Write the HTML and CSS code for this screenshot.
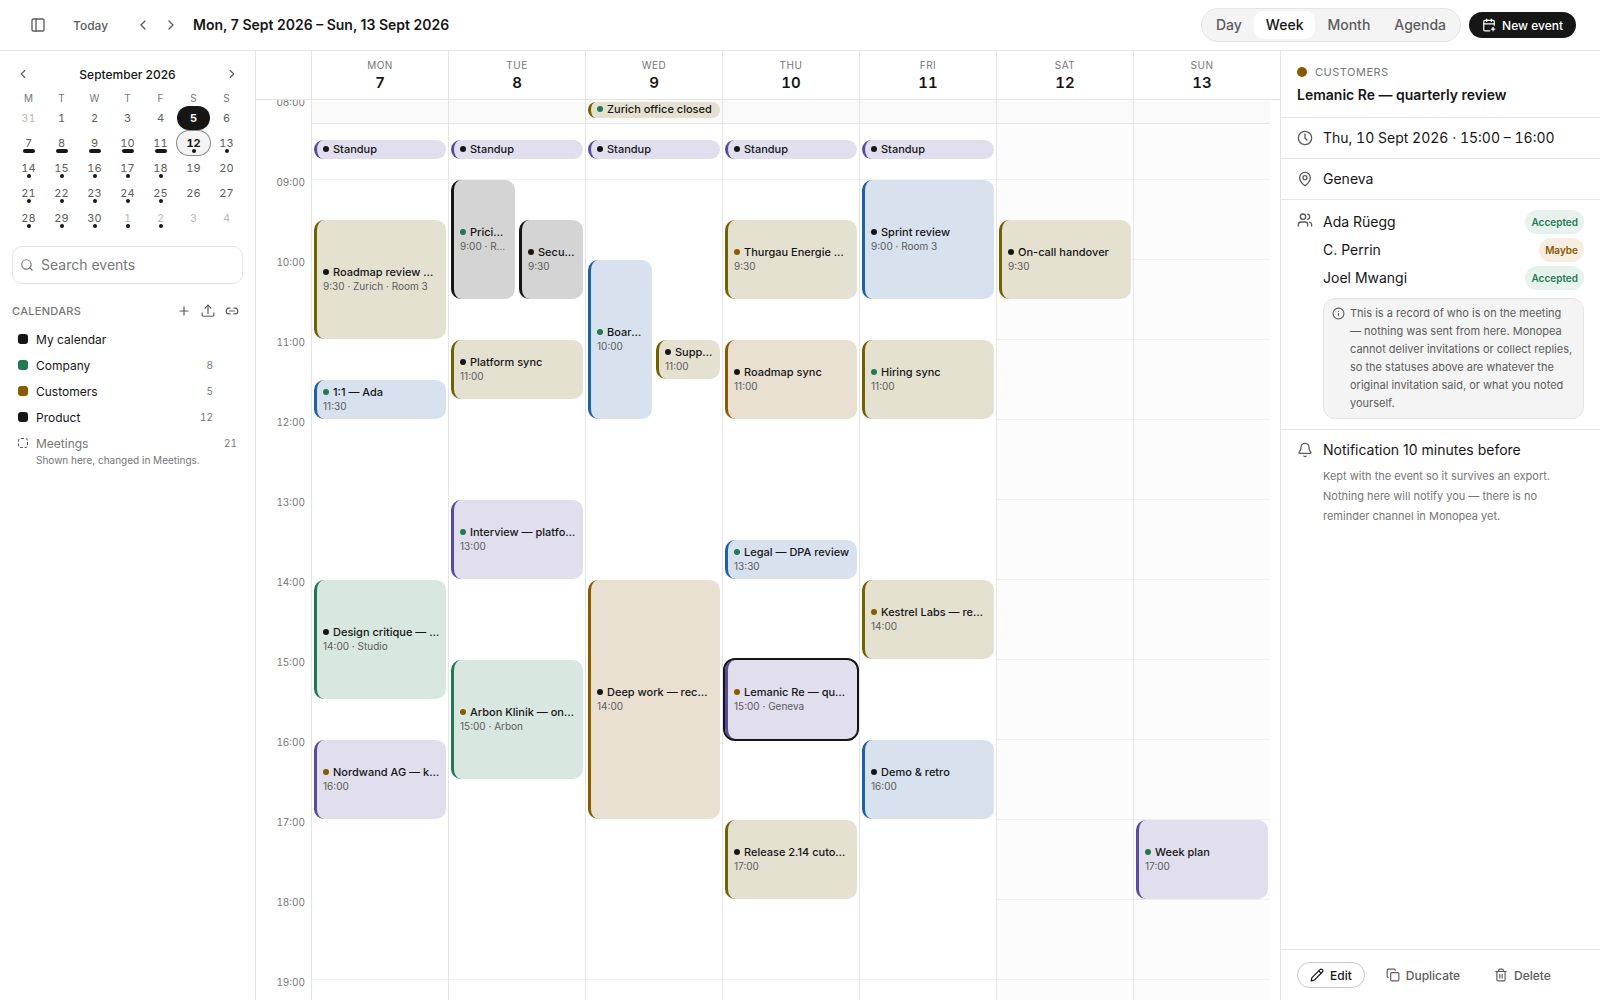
FILE: index.html
```html
<!DOCTYPE html>
<html lang="en">
<head>
    <meta charset="UTF-8">
    <meta name="viewport" content="width=device-width, initial-scale=1.0">
    <title>Calendar</title>
    <link rel="stylesheet" href="styles.css">
</head>
<body>

<!-- Shared icons -->
<svg class="sprite" aria-hidden="true">
    <symbol id="chevron-left" viewBox="0 0 24 24"><path d="m15 18-6-6 6-6"/></symbol>
    <symbol id="chevron-right" viewBox="0 0 24 24"><path d="m9 18 6-6-6-6"/></symbol>
</svg>

<header class="topbar">
    <button class="icon-btn" aria-label="Toggle sidebar"><svg class="icon" viewBox="0 0 24 24"><rect x="3" y="3" width="18" height="18" rx="2"/><path d="M9 3v18"/></svg></button>
    <button class="today-btn">Today</button>
    <div class="pager">
        <button class="icon-btn" aria-label="Previous week"><svg class="icon"><use href="#chevron-left"/></svg></button>
        <button class="icon-btn" aria-label="Next week"><svg class="icon"><use href="#chevron-right"/></svg></button>
    </div>
    <h1>Mon, 7 Sept 2026 – Sun, 13 Sept 2026</h1>
    <div class="views">
        <button>Day</button>
        <button class="active">Week</button>
        <button>Month</button>
        <button>Agenda</button>
    </div>
    <button class="new-event"><svg class="icon" viewBox="0 0 24 24"><path d="M16 19h6"/><path d="M16 2v4"/><path d="M19 16v6"/><path d="M21 12.6V6a2 2 0 0 0-2-2H5a2 2 0 0 0-2 2v14a2 2 0 0 0 2 2h8.5"/><path d="M3 10h18"/><path d="M8 2v4"/></svg>New event</button>
</header>

<div class="layout">
    <aside class="sidebar">
        <div class="month-nav">
            <button class="icon-btn" aria-label="Previous month"><svg class="icon"><use href="#chevron-left"/></svg></button>
            <h2>September 2026</h2>
            <button class="icon-btn" aria-label="Next month"><svg class="icon"><use href="#chevron-right"/></svg></button>
        </div>
        <div class="month">
            <span>M</span><span>T</span><span>W</span><span>T</span><span>F</span><span>S</span><span>S</span>
            <button class="out">31</button><button>1</button><button>2</button><button>3</button><button>4</button><button class="today">5</button><button>6</button>
            <button class="many">7</button><button class="many">8</button><button class="many">9</button><button class="many">10</button><button class="many">11</button><button class="one picked">12</button><button class="one">13</button>
            <button class="one">14</button><button class="one">15</button><button class="one">16</button><button class="one">17</button><button class="one">18</button><button>19</button><button>20</button>
            <button class="one">21</button><button class="one">22</button><button class="one">23</button><button class="one">24</button><button class="one">25</button><button>26</button><button>27</button>
            <button class="one">28</button><button class="one">29</button><button class="one">30</button><button class="one out">1</button><button class="one out">2</button><button class="out">3</button><button class="out">4</button>
        </div>

        <label class="search">
            <svg class="icon" viewBox="0 0 24 24"><circle cx="11" cy="11" r="8"/><path d="m21 21-4.3-4.3"/></svg>
            <input type="text" placeholder="Search events" aria-label="Search events">
        </label>

        <div class="cal-head">
            <h3>Calendars</h3>
            <button class="icon-btn" aria-label="Add calendar"><svg class="icon" viewBox="0 0 24 24"><path d="M5 12h14M12 5v14"/></svg></button>
            <button class="icon-btn" aria-label="Import"><svg class="icon" viewBox="0 0 24 24"><path d="M12 2v14"/><path d="m7 7 5-5 5 5"/><path d="M2 15v4a2 2 0 0 0 2 2h16a2 2 0 0 0 2-2v-4"/></svg></button>
            <button class="icon-btn" aria-label="Subscribe"><svg class="icon" viewBox="0 0 24 24"><path d="M9 17H7A5 5 0 0 1 7 7h2"/><path d="M15 7h2a5 5 0 1 1 0 10h-2"/><path d="M8 12h8"/></svg></button>
        </div>
        <ul class="cal-list">
            <li><label><input type="checkbox" class="ink" checked>My calendar</label></li>
            <li><label><input type="checkbox" class="green" checked>Company</label><span class="count">8</span></li>
            <li><label><input type="checkbox" class="amber" checked>Customers</label><span class="count">5</span></li>
            <li><label><input type="checkbox" class="ink" checked>Product</label><span class="count">12</span></li>
            <li class="linked"><label><input type="checkbox">Meetings</label><span class="count">21</span></li>
        </ul>
        <p class="cal-note">Shown here, changed in Meetings.</p>
    </aside>

    <main class="week">
        <div class="week-head">
            <div></div>
            <div class="day-head"><span>Mon</span><b>7</b></div>
            <div class="day-head"><span>Tue</span><b>8</b></div>
            <div class="day-head"><span>Wed</span><b>9</b></div>
            <div class="day-head"><span>Thu</span><b>10</b></div>
            <div class="day-head"><span>Fri</span><b>11</b></div>
            <div class="day-head"><span>Sat</span><b>12</b></div>
            <div class="day-head"><span>Sun</span><b>13</b></div>
        </div>
        <div class="scroller">
            <div class="all-day">
                <div></div><div></div>
                <div><button class="event olive"><span class="title"><i class="green"></i><span>Zurich office closed</span></span></button></div>
                <div></div><div></div><div></div><div></div>
            </div>
            <!-- one row is 15 minutes, row 1 is 08:00 -->
            <div class="grid">
                <div class="hours">
                    <span>08:00</span><span>09:00</span><span>10:00</span><span>11:00</span><span>12:00</span><span>13:00</span><span>14:00</span><span>15:00</span><span>16:00</span><span>17:00</span><span>18:00</span><span>19:00</span>
                </div>

                <div class="day">
                    <button class="event violet" style="grid-row: 3 / span 1"><span class="title"><i class="ink"></i><span>Standup</span></span></button>
                    <button class="event olive" style="grid-row: 7 / span 6"><span class="title"><i class="ink"></i><span>Roadmap review with product</span></span><small>9:30 · Zurich · Room 3</small></button>
                    <button class="event blue" style="grid-row: 15 / span 2"><span class="title"><i class="green"></i><span>1:1 — Ada</span></span><small>11:30</small></button>
                    <button class="event mint" style="grid-row: 25 / span 6"><span class="title"><i class="ink"></i><span>Design critique — calendar</span></span><small>14:00 · Studio</small></button>
                    <button class="event violet" style="grid-row: 33 / span 4"><span class="title"><i class="amber"></i><span>Nordwand AG — kickoff</span></span><small>16:00</small></button>
                </div>

                <div class="day">
                    <button class="event violet" style="grid-row: 3 / span 1"><span class="title"><i class="ink"></i><span>Standup</span></span></button>
                    <button class="event grey left" style="grid-row: 5 / span 6"><span class="title"><i class="green"></i><span>Pricing review</span></span><small>9:00 · Room 1</small></button>
                    <button class="event grey right" style="grid-row: 7 / span 4"><span class="title"><i class="ink"></i><span>Security review</span></span><small>9:30</small></button>
                    <button class="event olive" style="grid-row: 13 / span 3"><span class="title"><i class="ink"></i><span>Platform sync</span></span><small>11:00</small></button>
                    <button class="event violet" style="grid-row: 21 / span 4"><span class="title"><i class="green"></i><span>Interview — platform</span></span><small>13:00</small></button>
                    <button class="event mint" style="grid-row: 29 / span 6"><span class="title"><i class="amber"></i><span>Arbon Klinik — onboarding</span></span><small>15:00 · Arbon</small></button>
                </div>

                <div class="day">
                    <button class="event violet" style="grid-row: 3 / span 1"><span class="title"><i class="ink"></i><span>Standup</span></span></button>
                    <button class="event blue left" style="grid-row: 9 / span 8"><span class="title"><i class="green"></i><span>Board prep</span></span><small>10:00</small></button>
                    <button class="event olive right" style="grid-row: 13 / span 2"><span class="title"><i class="ink"></i><span>Support sync</span></span><small>11:00</small></button>
                    <button class="event brown" style="grid-row: 25 / span 12"><span class="title"><i class="ink"></i><span>Deep work — recurrence</span></span><small>14:00</small></button>
                </div>

                <div class="day">
                    <button class="event violet" style="grid-row: 3 / span 1"><span class="title"><i class="ink"></i><span>Standup</span></span></button>
                    <button class="event olive" style="grid-row: 7 / span 4"><span class="title"><i class="amber"></i><span>Thurgau Energie — demo</span></span><small>9:30</small></button>
                    <button class="event brown" style="grid-row: 13 / span 4"><span class="title"><i class="ink"></i><span>Roadmap sync</span></span><small>11:00</small></button>
                    <button class="event blue" style="grid-row: 23 / span 2"><span class="title"><i class="green"></i><span>Legal — DPA review</span></span><small>13:30</small></button>
                    <button class="event violet selected" style="grid-row: 29 / span 4"><span class="title"><i class="amber"></i><span>Lemanic Re — quarterly review</span></span><small>15:00 · Geneva</small></button>
                    <button class="event olive" style="grid-row: 37 / span 4"><span class="title"><i class="ink"></i><span>Release 2.14 cutover</span></span><small>17:00</small></button>
                </div>

                <div class="day">
                    <button class="event violet" style="grid-row: 3 / span 1"><span class="title"><i class="ink"></i><span>Standup</span></span></button>
                    <button class="event blue" style="grid-row: 5 / span 6"><span class="title"><i class="ink"></i><span>Sprint review</span></span><small>9:00 · Room 3</small></button>
                    <button class="event olive" style="grid-row: 13 / span 4"><span class="title"><i class="green"></i><span>Hiring sync</span></span><small>11:00</small></button>
                    <button class="event olive" style="grid-row: 25 / span 4"><span class="title"><i class="amber"></i><span>Kestrel Labs — renewal</span></span><small>14:00</small></button>
                    <button class="event blue" style="grid-row: 33 / span 4"><span class="title"><i class="ink"></i><span>Demo &amp; retro</span></span><small>16:00</small></button>
                </div>

                <div class="day weekend">
                    <button class="event olive" style="grid-row: 7 / span 4"><span class="title"><i class="ink"></i><span>On-call handover</span></span><small>9:30</small></button>
                </div>

                <div class="day weekend">
                    <button class="event violet" style="grid-row: 37 / span 4"><span class="title"><i class="green"></i><span>Week plan</span></span><small>17:00</small></button>
                </div>
            </div>
        </div>
    </main>

    <aside class="panel">
        <div class="panel-head">
            <p><i class="amber"></i>Customers</p>
            <h2>Lemanic Re — quarterly review</h2>
        </div>
        <div class="field">
            <svg class="icon" viewBox="0 0 24 24"><circle cx="12" cy="12" r="10"/><path d="M12 6v6l3 3"/></svg>
            <p class="when">Thu, 10 Sept 2026 · 15:00 – 16:00</p>
        </div>
        <div class="field">
            <svg class="icon" viewBox="0 0 24 24"><path d="M20 10c0 5-5.5 10.2-7.4 11.8a1 1 0 0 1-1.2 0C9.5 20.2 4 15 4 10a8 8 0 0 1 16 0"/><circle cx="12" cy="10" r="3"/></svg>
            <p>Geneva</p>
        </div>
        <div class="field people">
            <svg class="icon" viewBox="0 0 24 24"><path d="M16 21v-2a4 4 0 0 0-4-4H6a4 4 0 0 0-4 4v2"/><circle cx="9" cy="7" r="4"/><path d="M22 21v-2a4 4 0 0 0-3-3.9"/><path d="M16 3.1a4 4 0 0 1 0 7.8"/></svg>
            <div>
                <ul>
                    <li>Ada Rüegg<span class="status">Accepted</span></li>
                    <li>C. Perrin<span class="status maybe">Maybe</span></li>
                    <li>Joel Mwangi<span class="status">Accepted</span></li>
                </ul>
                <div class="note">
                    <svg class="icon" viewBox="0 0 24 24"><circle cx="12" cy="12" r="10"/><path d="M12 16v-4M12 8h.01"/></svg>
                    <p>This is a record of who is on the meeting — nothing was sent from here. Monopea cannot deliver invitations or collect replies, so the statuses above are whatever the original invitation said, or what you noted yourself.</p>
                </div>
            </div>
        </div>
        <div class="field last">
            <svg class="icon" viewBox="0 0 24 24"><path d="M10.3 21a2 2 0 0 0 3.4 0"/><path d="M3.3 15.3A1 1 0 0 0 4 17h16a1 1 0 0 0 .7-1.7C19.4 14 18 12.5 18 8A6 6 0 0 0 6 8c0 4.5-1.4 6-2.7 7.3"/></svg>
            <div>
                <p>Notification 10 minutes before</p>
                <p class="hint">Kept with the event so it survives an export. Nothing here will notify you — there is no reminder channel in Monopea yet.</p>
            </div>
        </div>
        <footer>
            <button class="edit"><svg class="icon" viewBox="0 0 24 24"><path d="M21.2 6.8a1 1 0 0 0-4-4L3.8 16.2a2 2 0 0 0-.5.8l-1.3 4.4a.5.5 0 0 0 .6.6l4.4-1.3a2 2 0 0 0 .8-.5z"/><path d="m15 5 4 4"/></svg>Edit</button>
            <button><svg class="icon" viewBox="0 0 24 24"><rect x="8" y="8" width="14" height="14" rx="2"/><path d="M4 16c-1.1 0-2-.9-2-2V4c0-1.1.9-2 2-2h10c1.1 0 2 .9 2 2"/></svg>Duplicate</button>
            <button><svg class="icon" viewBox="0 0 24 24"><path d="M3 6h18"/><path d="M19 6v14a2 2 0 0 1-2 2H7a2 2 0 0 1-2-2V6"/><path d="M8 6V4a2 2 0 0 1 2-2h4a2 2 0 0 1 2 2v2"/><path d="M10 11v6M14 11v6"/></svg>Delete</button>
        </footer>
    </aside>
</div>

</body>
</html>
```

FILE: styles.css
```css
* {
    box-sizing: border-box;
    margin: 0;
    padding: 0;
}
body {
    display: flex;
    flex-direction: column;
    height: 100vh;
    font-family: Inter, "Liberation Sans", sans-serif;
    font-size: 12px;
    color: #161616;
    background: #fff;
    overflow: hidden;
}
button, input {
    font: inherit;
    color: inherit;
    background: none;
    border: 0;
}
button {
    cursor: pointer;
}
ul {
    list-style: none;
}
.sprite {
    display: none;
}
.icon {
    width: 16px;
    height: 16px;
    flex: none;
    fill: none;
    stroke: currentColor;
    stroke-width: 2;
    stroke-linecap: round;
    stroke-linejoin: round;
}
.icon-btn {
    display: flex;
    align-items: center;
    justify-content: center;
    width: 22px;
    height: 22px;
    color: #5c5c5c;
}
.month, .count, .hours, .day-head, .when {
    font-variant-numeric: tabular-nums;
}

/* Calendar colours */
.ink { background: #161616; }
.green { background: #1f7a54; }
.amber { background: #8a5a00; }

/* Top bar */
.topbar {
    display: flex;
    align-items: center;
    height: 51px;
    padding: 0 24px 0 27px;
    border-bottom: 1px solid #e5e5e5;
}
.today-btn {
    margin-left: 24px;
    font-weight: 500;
    color: #5c5c5c;
}
.pager {
    display: flex;
    gap: 6px;
    margin: 0 11px 0 24px;
}
.topbar h1 {
    font-size: 14px;
    font-weight: 600;
    line-height: 20px;
}
.views {
    display: flex;
    margin-left: auto;
    padding: 2px;
    border: 1px solid #e5e5e5;
    border-radius: 17px;
    background: #f4f4f4;
}
.views button {
    height: 28px;
    padding: 0 12px 1px;
    border-radius: 10px;
    font-size: 14px;
    font-weight: 500;
    color: #5c5c5c;
}
.views .active {
    background: #fff;
    color: #161616;
}
.new-event {
    display: flex;
    align-items: center;
    gap: 6px;
    height: 26px;
    margin-left: 8px;
    padding: 0 13px;
    border-radius: 13px;
    background: #161616;
    color: #fff;
    font-weight: 500;
}
.new-event .icon {
    width: 14px;
    height: 14px;
}

.layout {
    display: flex;
    flex: 1;
    min-height: 0;
}

/* Sidebar */
.sidebar {
    width: 256px;
    flex: none;
    padding: 12px;
    border-right: 1px solid #e5e5e5;
}
.month-nav {
    display: flex;
    align-items: center;
    justify-content: space-between;
}
.month-nav h2 {
    font-size: 12px;
    font-weight: 500;
}
.month-nav .icon {
    width: 14px;
    height: 14px;
}
.month {
    display: grid;
    grid-template-columns: repeat(7, 1fr);
    row-gap: 1px;
}
.month span {
    padding-top: 7px;
    font-size: 10px;
    line-height: 13px;
    text-align: center;
    color: #767676;
}
.month button {
    position: relative;
    height: 24px;
    border-radius: 12px;
    font-size: 11px;
    color: #5c5c5c;
}
.month .out {
    color: #bbb;
}
.month .today {
    background: #161616;
    color: #fff;
    font-weight: 700;
}
.month .picked {
    background: #f4f4f4;
    box-shadow: 0 0 0 1px #8a8a8a;
    color: #161616;
    font-weight: 700;
}
.month .one::after, .month .many::after {
    content: "";
    position: absolute;
    left: 50%;
    bottom: 2px;
    width: 4px;
    height: 4px;
    border-radius: 2px;
    background: #161616;
    transform: translateX(-50%);
}
.month .many::after {
    width: 12px;
}
.search {
    display: flex;
    align-items: center;
    gap: 7px;
    height: 38px;
    margin-top: 16px;
    padding: 0 7px;
    border: 1px solid #e5e5e5;
    border-radius: 10px;
    color: #767676;
}
.search .icon {
    width: 14px;
    height: 14px;
}
.search input {
    flex: 1;
    min-width: 0;
    padding-bottom: 2px;
    font-size: 14px;
    outline: none;
}
.search input::placeholder {
    color: #767676;
}
.cal-head {
    display: flex;
    align-items: center;
    gap: 2px;
    margin: 16px 0 4px;
}
.cal-head h3 {
    flex: 1;
    font-size: 11px;
    font-weight: 500;
    letter-spacing: 0.3px;
    text-transform: uppercase;
    color: #767676;
}
.cal-head .icon {
    width: 14px;
    height: 14px;
}
.cal-list li {
    display: flex;
    align-items: center;
    justify-content: space-between;
    height: 26px;
    padding: 0 30px 0 6px;
}
.cal-list label {
    display: flex;
    align-items: center;
    gap: 8px;
}
.cal-list input {
    appearance: none;
    width: 10px;
    height: 10px;
    border-radius: 3px;
}
.count {
    font-size: 10px;
    color: #767676;
}
.cal-list .linked {
    padding-right: 6px;
    color: #767676;
}
.linked input {
    border: 1px dashed #5b4b9a;
}
.cal-note {
    margin-top: -3px;
    padding-left: 24px;
    font-size: 10px;
    line-height: 14px;
    color: #767676;
}

/* Week grid */
.week {
    display: flex;
    flex: 1;
    flex-direction: column;
    min-width: 0;
}
.week-head, .grid {
    display: grid;
    grid-template-columns: 55px repeat(7, minmax(0, 1fr));
}
.week-head {
    padding-right: 10px;
    border-bottom: 1px solid #e5e5e5;
}
.day-head {
    padding: 7px 0 6px;
    border-left: 1px solid #e5e5e5;
    text-align: center;
}
.day-head span {
    display: block;
    margin-bottom: 1px;
    font-size: 10px;
    line-height: 14px;
    letter-spacing: 0.5px;
    text-transform: uppercase;
    color: #767676;
}
.day-head b {
    display: block;
    font-size: 15px;
    font-weight: 600;
    line-height: 20px;
}
.scroller {
    flex: 1;
    min-height: 0;
    padding-right: 10px;
    overflow-y: auto;
    scrollbar-width: none;
}
/* stays on top of the hours while they scroll */
.all-day {
    position: sticky;
    top: 0;
    z-index: 2;
    display: grid;
    grid-template-columns: repeat(7, minmax(0, 1fr));
    height: 24px;
    margin: 0 0 -24px 55px;
    border-bottom: 1px solid #e5e5e5;
    background: #fafafa;
}
.all-day > div {
    padding: 2px;
    border-left: 1px solid #e5e5e5;
}
.all-day .event {
    width: 100%;
    height: 16px;
    margin: 0;
}
.hours {
    margin-top: -6px;
    padding-right: 6px;
}
.hours span {
    display: block;
    height: 80px;
    font-size: 10px;
    line-height: 16px;
    text-align: right;
    color: #767676;
}
.day {
    display: grid;
    grid-template-columns: 1fr 1fr;
    grid-template-rows: repeat(48, 20px);
    border-left: 1px solid #e5e5e5;
    /* working hours, 09:00 to 18:00, are plain white */
    background:
        linear-gradient(#fff, #fff) 0 80px / 100% 720px no-repeat,
        repeating-linear-gradient(transparent 0 79px, #f0f0f0 79px 80px);
}
.weekend {
    background: repeating-linear-gradient(#fcfcfc 0 79px, #f0f0f0 79px 80px);
}
.event {
    display: flex;
    flex-direction: column;
    justify-content: center;
    grid-column: 1 / -1;
    min-width: 0;
    margin: 0 2px 1px;
    padding: 0 6px 2px;
    border-left: 3px solid;
    border-radius: 10px;
    overflow: hidden;
    text-align: left;
}
.left { grid-column: 1; }
.right { grid-column: 2; }
.title {
    display: flex;
    align-items: center;
    gap: 4px;
    font-size: 11px;
    font-weight: 500;
    line-height: 14px;
    color: #161616;
}
.title i {
    flex: none;
    width: 6px;
    height: 6px;
    border-radius: 50%;
}
.title span, .event small {
    overflow: hidden;
    text-overflow: ellipsis;
    white-space: nowrap;
}
.event small {
    font-size: 10px;
    line-height: 14px;
    color: #5c5c5c;
}
.olive { background: #e5e1d1; border-color: #736000; }
.violet { background: #e1deed; border-color: #5b4b9a; }
.blue { background: #d7e2ee; border-color: #1d62a5; }
.mint { background: #d8e7df; border-color: #1f7a54; }
.brown { background: #e9e0d1; border-color: #8a5a00; }
.grey { background: #d4d4d4; border-color: #161616; }
.selected {
    outline: 2px solid #161616;
}

/* Event panel */
.panel {
    display: flex;
    flex-direction: column;
    width: 320px;
    flex: none;
    border-left: 1px solid #e5e5e5;
    font-size: 14px;
}
.panel-head {
    padding: 12px 16px;
    border-bottom: 1px solid #e5e5e5;
}
.panel-head p {
    display: flex;
    align-items: center;
    gap: 8px;
    font-size: 11px;
    line-height: 18px;
    letter-spacing: 0.5px;
    text-transform: uppercase;
    color: #767676;
}
.panel-head i {
    width: 10px;
    height: 10px;
    border-radius: 50%;
}
.panel-head h2 {
    margin-top: 4px;
    font-size: 14px;
    font-weight: 600;
    line-height: 20px;
}
.field {
    display: flex;
    gap: 10px;
    padding: 10px 16px;
    border-bottom: 1px solid #e5e5e5;
    line-height: 20px;
}
.field > .icon {
    margin-top: 2px;
    color: #5c5c5c;
}
.field > div {
    flex: 1;
}
.people li {
    display: flex;
    align-items: center;
    justify-content: space-between;
    height: 24px;
    margin-bottom: 4px;
}
.status {
    padding: 0 6px;
    border-radius: 12px;
    background: #e8f2ed;
    color: #1f7a54;
    font-size: 10px;
    font-weight: 600;
    line-height: 24px;
}
.maybe {
    background: #f6eee0;
    color: #8a5a00;
}
.note {
    display: flex;
    gap: 5px;
    padding: 5px 8px 6px;
    margin-top: 8px;
    border: 1px solid #e5e5e5;
    border-radius: 12px;
    background: #f4f4f4;
    color: #5c5c5c;
    font-size: 11px;
    line-height: 18px;
}
.note .icon {
    width: 13px;
    height: 13px;
    margin-top: 3px;
}
.last {
    border-bottom: 0;
}
.hint {
    margin-top: 6px;
    font-size: 11px;
    color: #767676;
}
.panel footer {
    display: flex;
    gap: 8px;
    margin-top: auto;
    padding: 12px 16px;
    border-top: 1px solid #e5e5e5;
}
.panel footer button {
    display: flex;
    align-items: center;
    gap: 6px;
    height: 26px;
    padding: 0 13px;
    border-radius: 13px;
    font-size: 12px;
    font-weight: 500;
    color: #5c5c5c;
}
.panel footer .icon {
    width: 14px;
    height: 14px;
}
.panel footer .edit {
    padding: 0 12px;
    border: 1px solid #c8c8c8;
    color: #161616;
}
```
